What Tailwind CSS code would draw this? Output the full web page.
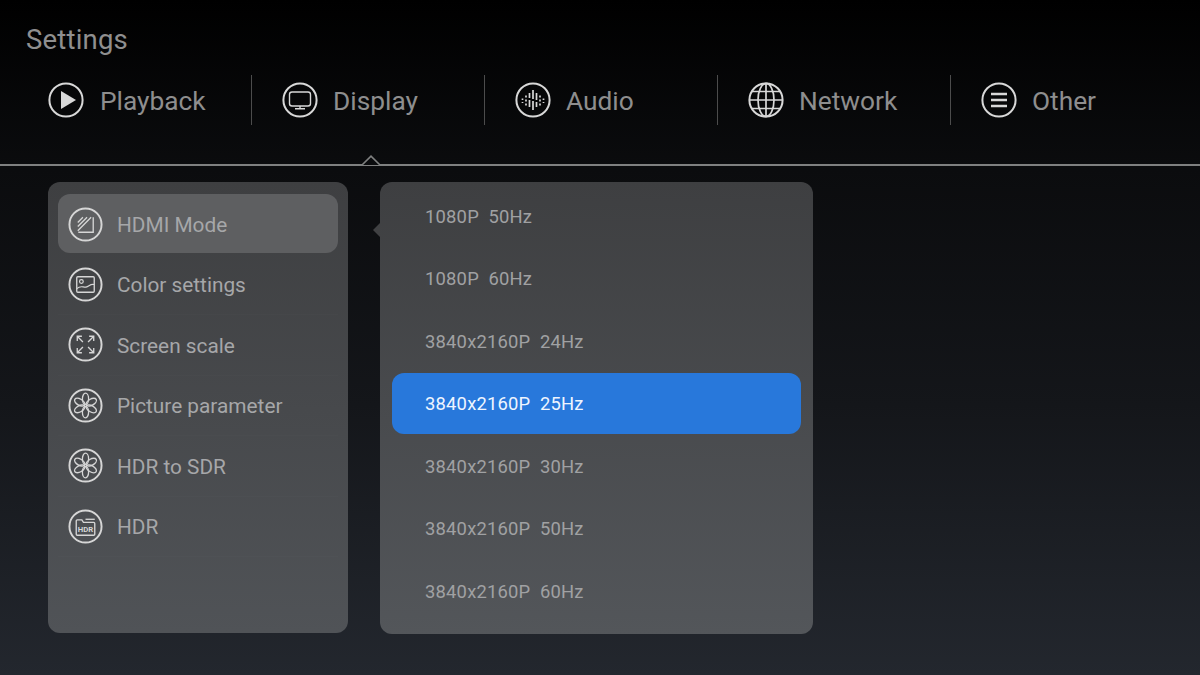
<!DOCTYPE html>
<html lang="en">
<head>
  <meta charset="UTF-8">
  <title>Settings</title>
  <script src="https://cdn.jsdelivr.net/npm/@tailwindcss/browser@4"></script>
</head>
<body class="w-[1200px] h-[675px] overflow-hidden bg-[linear-gradient(180deg,#000_0%,#0b0c0e_25%,#14161a_60%,#23272e_100%)] font-['Roboto',sans-serif]">

  <!-- header -->
  <h1 class="pl-[26px] pt-[23px] text-[27.5px] leading-[34px] font-normal tracking-[0.2px] text-[#8f8f8f]">Settings</h1>

  <nav class="relative h-[109px] border-b-[2px] border-[#7f8080]">
    <ul class="flex pl-[18px] pt-[18px]">
      <li class="w-[233px] h-[50px] flex items-center gap-[16px] pl-[30px]">
        <svg class="w-[36px] h-[36px] text-[#d8d8d8]" viewBox="0 0 36 36" fill="none" stroke="currentColor" stroke-width="2"><circle cx="18" cy="18" r="16.6"/><path d="M13 9 L28 18 L13 27 Z" fill="currentColor" stroke="none"/></svg>
        <span class="mt-[3px] text-[26.3px] text-[#8e8e8e]">Playback</span>
      </li>
      <li class="w-[233px] h-[50px] flex items-center gap-[15px] pl-[30px] border-l border-[#4c4c4c]">
        <svg class="w-[36px] h-[36px] text-[#d8d8d8]" viewBox="0 0 36 36" fill="none" stroke="currentColor" stroke-width="2"><circle cx="18" cy="18" r="16.6"/><rect x="7.5" y="10" width="21" height="14" rx="2.5" stroke-width="1.4"/><path d="M18 24v2.5M13 26.8h10" stroke-width="1.4"/></svg>
        <span class="mt-[3px] text-[26.3px] text-[#8e8e8e]">Display</span>
      </li>
      <li class="w-[233px] h-[50px] flex items-center gap-[15px] pl-[30px] border-l border-[#4c4c4c]">
        <svg class="w-[36px] h-[36px] text-[#d8d8d8]" viewBox="0 0 36 36" fill="none" stroke="currentColor" stroke-width="2"><circle cx="18" cy="18" r="16.6"/><path d="M7.5 16.5v1.5M7.5 20v1M11 13.5v2M11 17.5v2M11 21.5v2M14.5 11v5M14.5 18v7M18 8v9M18 19v9M21.5 11v7M21.5 20v5M25 13.5v2M25 17.5v2M25 21.5v2M28.5 16.5v1.5M28.5 20v1" stroke-width="1.7"/></svg>
        <span class="mt-[3px] text-[26.3px] text-[#8e8e8e]">Audio</span>
      </li>
      <li class="w-[233px] h-[50px] flex items-center gap-[15px] pl-[30px] border-l border-[#4c4c4c]">
        <svg class="w-[36px] h-[36px] text-[#d8d8d8]" viewBox="0 0 36 36" fill="none" stroke="currentColor" stroke-width="2"><circle cx="18" cy="18" r="16.6"/><ellipse cx="18" cy="18" rx="8" ry="16.6" stroke-width="1.7"/><path d="M18 1.4v33.2M1.4 18h33.2M4 9.5h28M4 26.5h28" stroke-width="1.7"/></svg>
        <span class="mt-[3px] text-[26.3px] text-[#8e8e8e]">Network</span>
      </li>
      <li class="w-[233px] h-[50px] flex items-center gap-[15px] pl-[30px] border-l border-[#4c4c4c]">
        <svg class="w-[36px] h-[36px] text-[#d8d8d8]" viewBox="0 0 36 36" fill="none" stroke="currentColor" stroke-width="2"><circle cx="18" cy="18" r="16.6"/><path d="M10 12h16M10 18h16M10 24h16" stroke-width="2.6"/></svg>
        <span class="mt-[3px] text-[26.3px] text-[#8e8e8e]">Other</span>
      </li>
    </ul>
    <!-- caret sitting on the line -->
    <svg class="absolute left-[360px] bottom-[-2px] w-[22px] h-[11px]" viewBox="0 0 22 11" fill="none"><path d="M0 10 H2 L11 1.2 L20 10 H22" fill="#0a0b0d" stroke="#7f8080" stroke-width="1.6"/></svg>
  </nav>

  <main class="flex gap-[32px] pl-[48px] pt-[16px]">
    <!-- left menu -->
    <section class="w-[300px] h-[451px] rounded-[12px] bg-gradient-to-b from-[#3e3f41] to-[#505357] px-[10px] pt-[12px]">
      <ul class="flex flex-col">
        <li class="h-[59px] mb-[1.5px] flex items-center gap-[14px] pl-[10px] pt-[1px] rounded-[12px] bg-[#5e5f61]">
          <svg class="w-[35px] h-[35px] text-[#d6d6d6]" viewBox="0 0 34 34" fill="none" stroke="currentColor" stroke-width="1.9"><circle cx="17" cy="17" r="15.6"/><path d="M10 24.5h14.5V10" stroke-width="1.3"/><path d="M9.5 15l5-5M9.5 19l9-9M9.5 23l13-13" stroke-width="1.3"/></svg>
          <span class="mt-[3px] text-[20.8px] text-[#a6a7a9]">HDMI Mode</span>
        </li>
        <li class="h-[60.5px] flex items-center gap-[14px] pl-[10px] border-b border-white/[0.015]">
          <svg class="w-[35px] h-[35px] text-[#d6d6d6]" viewBox="0 0 34 34" fill="none" stroke="currentColor" stroke-width="1.9"><circle cx="17" cy="17" r="15.6"/><rect x="8.5" y="9.5" width="17" height="15" rx="1" stroke-width="1.3"/><circle cx="13" cy="14" r="1.8" stroke-width="1.2"/><path d="M8.5 21c4-3.5 6-1 9-1.5s4-3.5 8-2.5" stroke-width="1.2"/></svg>
          <span class="mt-[2px] text-[20.8px] text-[#a6a7a9]">Color settings</span>
        </li>
        <li class="h-[60.5px] flex items-center gap-[14px] pl-[10px] border-b border-white/[0.015]">
          <svg class="w-[35px] h-[35px] text-[#d6d6d6]" viewBox="0 0 34 34" fill="none" stroke="currentColor" stroke-width="1.9"><circle cx="17" cy="17" r="15.6"/><path d="M9 9l5.5 5.5M9 13.5V9h4.5M25 9l-5.5 5.5M25 13.5V9h-4.5M9 25l5.5-5.5M9 20.5V25h4.5M25 25l-5.5-5.5M25 20.5V25h-4.5" stroke-width="1.3"/></svg>
          <span class="mt-[3px] text-[20.8px] text-[#a6a7a9]">Screen scale</span>
        </li>
        <li class="h-[60.5px] flex items-center gap-[14px] pl-[10px] border-b border-white/[0.015]">
          <svg class="w-[35px] h-[35px] text-[#d6d6d6]" viewBox="0 0 34 34" fill="none" stroke="currentColor" stroke-width="1.9"><circle cx="17" cy="17" r="15.6"/><g stroke-width="1.3"><ellipse cx="17" cy="10.5" rx="3" ry="5.5"/><ellipse cx="17" cy="10.5" rx="3" ry="5.5" transform="rotate(60 17 17)"/><ellipse cx="17" cy="10.5" rx="3" ry="5.5" transform="rotate(120 17 17)"/><ellipse cx="17" cy="10.5" rx="3" ry="5.5" transform="rotate(180 17 17)"/><ellipse cx="17" cy="10.5" rx="3" ry="5.5" transform="rotate(240 17 17)"/><ellipse cx="17" cy="10.5" rx="3" ry="5.5" transform="rotate(300 17 17)"/></g></svg>
          <span class="mt-[3px] text-[20.8px] text-[#a6a7a9]">Picture parameter</span>
        </li>
        <li class="h-[60.5px] flex items-center gap-[14px] pl-[10px] border-b border-white/[0.015]">
          <svg class="w-[35px] h-[35px] text-[#d6d6d6]" viewBox="0 0 34 34" fill="none" stroke="currentColor" stroke-width="1.9"><circle cx="17" cy="17" r="15.6"/><g stroke-width="1.3"><ellipse cx="17" cy="10.5" rx="3" ry="5.5"/><ellipse cx="17" cy="10.5" rx="3" ry="5.5" transform="rotate(60 17 17)"/><ellipse cx="17" cy="10.5" rx="3" ry="5.5" transform="rotate(120 17 17)"/><ellipse cx="17" cy="10.5" rx="3" ry="5.5" transform="rotate(180 17 17)"/><ellipse cx="17" cy="10.5" rx="3" ry="5.5" transform="rotate(240 17 17)"/><ellipse cx="17" cy="10.5" rx="3" ry="5.5" transform="rotate(300 17 17)"/></g></svg>
          <span class="mt-[3px] text-[20.8px] text-[#a6a7a9]">HDR to SDR</span>
        </li>
        <li class="h-[60.5px] flex items-center gap-[14px] pl-[10px] border-b border-white/[0.015]">
          <svg class="w-[35px] h-[35px] text-[#d6d6d6]" viewBox="0 0 34 34" fill="none" stroke="currentColor" stroke-width="1.9"><circle cx="17" cy="17" r="15.6"/><path d="M8 11.5V24.5a1 1 0 0 0 1 1H25a1 1 0 0 0 1-1V14a1 1 0 0 0-1-1H15l-1.5-2.5H9a1 1 0 0 0-1 1z" stroke-width="1.3"/><path d="M17 10h9" stroke-width="1.3"/><text x="17" y="22.5" text-anchor="middle" font-family="Roboto" font-size="7.5" font-weight="700" fill="currentColor" stroke="none">HDR</text></svg>
          <span class="mt-[3px] text-[20.8px] text-[#a6a7a9]">HDR</span>
        </li>
      </ul>
    </section>

    <!-- right options -->
    <section class="relative w-[433px] h-[452px] rounded-[12px] bg-gradient-to-b from-[#3e3f41] to-[#53565a] px-[12px] pt-[3.5px]">
      <div class="absolute left-[-7px] top-[41px] w-0 h-0 border-y-[7px] border-y-transparent border-r-[7px] border-r-[#404143]"></div>
      <ul class="flex flex-col">
        <li class="h-[62.5px] flex items-center pl-[33px] text-[18.4px] tracking-[0.2px] whitespace-pre text-[#a0a1a3]">1080P  50Hz</li>
        <li class="h-[62.5px] flex items-center pl-[33px] text-[18.4px] tracking-[0.2px] whitespace-pre text-[#a0a1a3]">1080P  60Hz</li>
        <li class="h-[62.5px] flex items-center pl-[33px] text-[18.4px] tracking-[0.2px] whitespace-pre text-[#a0a1a3]">3840x2160P  24Hz</li>
        <li class="h-[61px] mb-[1.5px] flex items-center pl-[33px] text-[18.4px] tracking-[0.2px] whitespace-pre text-[#eef5ff] bg-[#2878db] rounded-[12px]">3840x2160P  25Hz</li>
        <li class="h-[62.5px] flex items-center pl-[33px] text-[18.4px] tracking-[0.2px] whitespace-pre text-[#a0a1a3]">3840x2160P  30Hz</li>
        <li class="h-[62.5px] flex items-center pl-[33px] text-[18.4px] tracking-[0.2px] whitespace-pre text-[#a0a1a3]">3840x2160P  50Hz</li>
        <li class="h-[62.5px] flex items-center pl-[33px] text-[18.4px] tracking-[0.2px] whitespace-pre text-[#a0a1a3]">3840x2160P  60Hz</li>
      </ul>
    </section>
  </main>
</body>
</html>
